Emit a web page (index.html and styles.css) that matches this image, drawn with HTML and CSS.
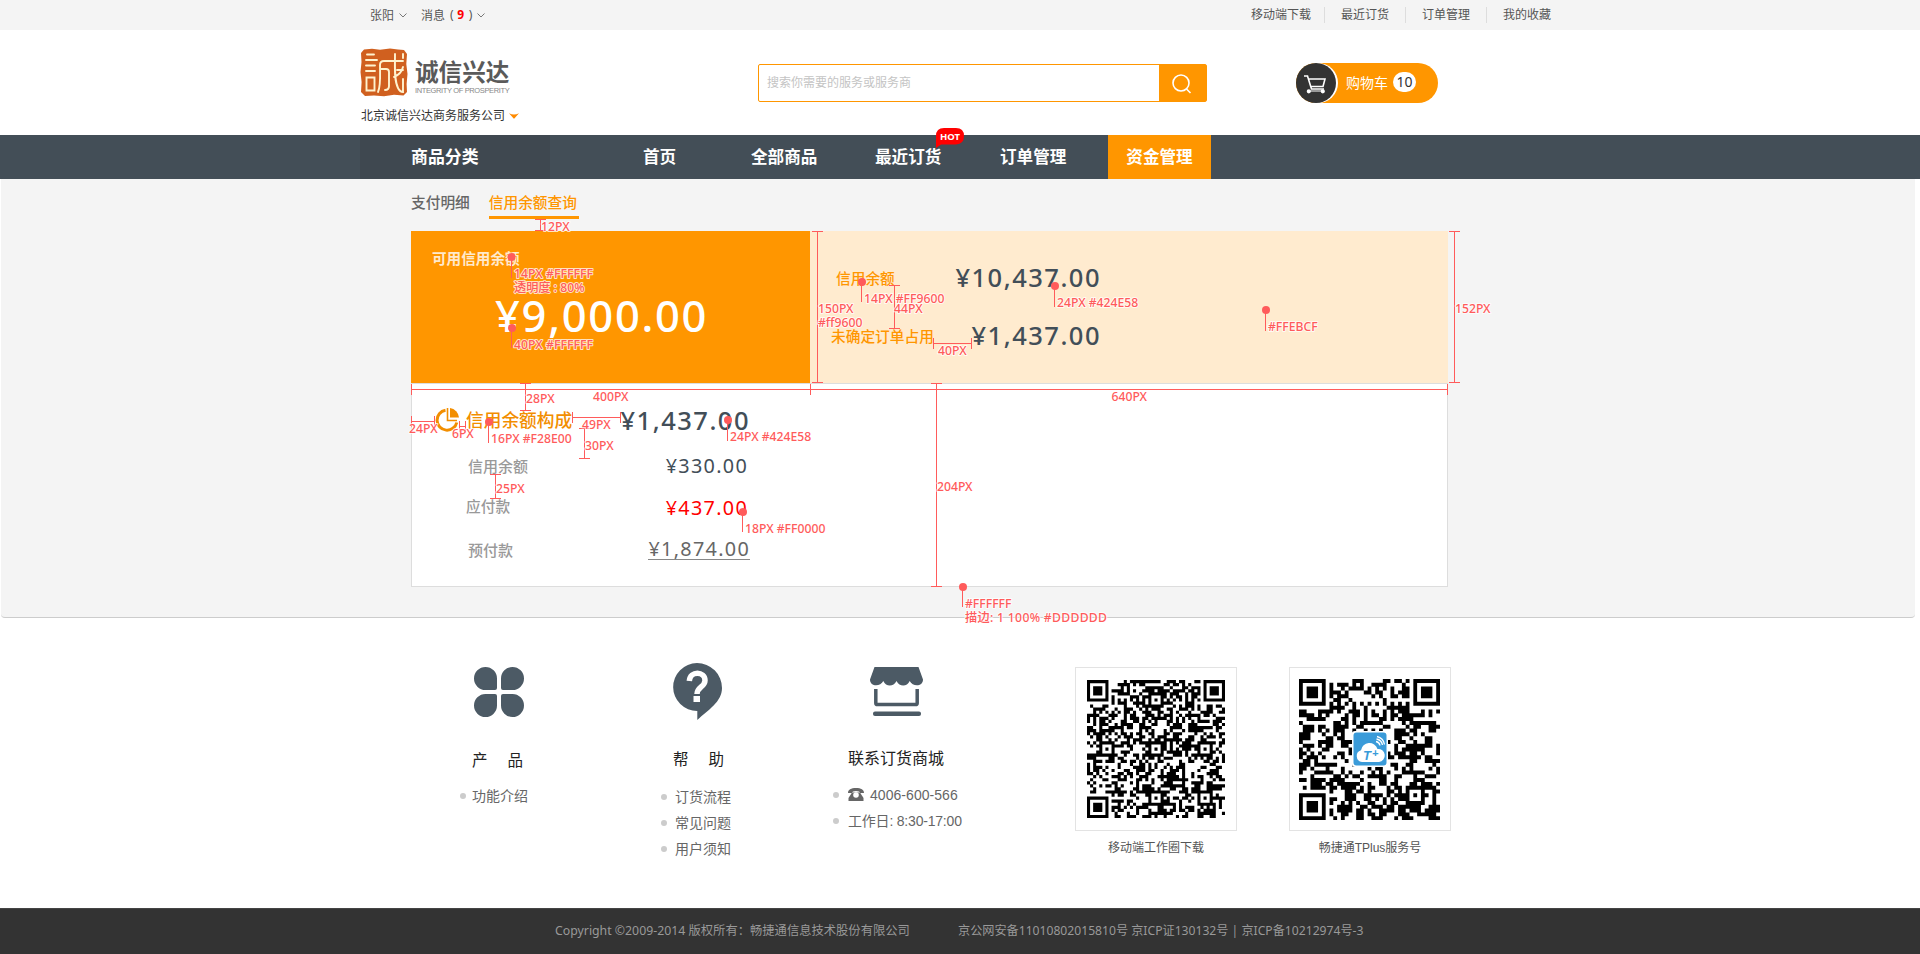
FILE: index.html
```html
<!DOCTYPE html>
<html lang="zh-CN">
<head>
<meta charset="utf-8">
<title>信用余额查询</title>
<link rel="stylesheet" href="styles.css">
</head>
<body>
<header>
  <div class="topbar">
    <div class="wrap topbar-row">
      <span class="user">张阳</span>
      <svg class="chev" width="8" height="5" viewBox="0 0 8 5"><path d="M.5.5 4 4 7.500.5"/></svg>
      <span class="msg">消息<i class="paren open">(</i><b>9</b><i class="paren">)</i></span>
      <svg class="chev" width="8" height="5" viewBox="0 0 8 5"><path d="M.5.5 4 4 7.500.5"/></svg>
      <nav class="toplinks"><a>移动端下载</a><a>最近订货</a><a>订单管理</a><a>我的收藏</a></nav>
    </div>
  </div>
  <div class="wrap masthead">
    <div class="brand">
      <div class="brand-row">
        <svg class="seal" width="48" height="49" viewBox="0 0 48 49">
          <path fill="#d0601f" d="M4 1.500 12 .8 20 1.800 30 .6 38 1.500 44 2 47 6 46.300 16 47.500 26 46.600 36 47 44 43.500 47.500 34 46.800 24 48.300 14 47.400 5 48 1 44 1.600 34 .5 24 1.500 14 1 5z"/>
          <g fill="none" stroke="#fff3cf" stroke-width="1.900" stroke-linecap="round">
            <path d="M7 6.500h7M6 12h11M6 17.500h9M6 23h9M6.500 29.500h8v13h-8z"/>
            <path d="M18 44c3-6 2-18 2-27q0-4 4-4h19M20 21h6q3 0 3 3v14q0 4-4 4M35 6c0 14-1 26 3 34q2 4 5 4v-13M43 6v4M43 19c-1 4-4 8-9 10M37 22h6"/>
          </g>
        </svg>
        <div class="brand-name"><strong>诚信兴达</strong><small>INTEGRITY OF PROSPERITY</small></div>
      </div>
      <div class="company">北京诚信兴达商务服务公司
        <svg width="10" height="6" viewBox="0 0 10 6"><path fill="#ff8a00" d="M0 .3Q5 2.800 10 .3L5.600 5.300Q5 6 4.400 5.300z"/></svg>
      </div>
    </div>
    <div class="search">
      <div class="search-input">搜索你需要的服务或服务商</div>
      <div class="search-btn"><svg width="20" height="20" viewBox="0 0 20 20" fill="none" stroke="#fff" stroke-width="1.600"><circle cx="9" cy="9" r="8"/><path d="m14.500 15 4 4"/></svg></div>
    </div>
    <div class="cart">
      <div class="cart-icon"><svg width="22" height="19" viewBox="0 0 22 19" fill="none" stroke="#fff" stroke-width="1.600"><path d="M0 1h3.500L7.500 14H20M4.500 4H21L19 11.500H7"/><path d="M4 16h15" stroke-width="1"/><circle cx="4.800" cy="16.300" r="1.300" fill="#fff"/><circle cx="18.800" cy="16.300" r="1.300" fill="#fff"/></svg></div>
      <span class="cart-label">购物车</span><span class="cart-count">10</span>
    </div>
  </div>
  <div class="navbar">
    <nav class="wrap nav-row">
      <a class="nav-cat">商品分类</a>
      <a class="n-home">首页</a>
      <a class="n-all">全部商品</a>
      <a class="n-recent">最近订货<span class="hot"><svg width="28" height="20" viewBox="0 0 28 20"><path fill="#f00" d="M0 20V8Q0 0 8 0H20Q28 0 28 8T20 16.500H5z"/></svg><em>HOT</em></span></a>
      <a class="n-order">订单管理</a>
      <a class="n-fund">资金管理</a>
    </nav>
  </div>
</header>

<main class="page">
  <div class="content">
    <div class="tabs"><a>支付明细</a><a class="active">信用余额查询</a></div>
    <section class="summary">
      <div class="available"><h2>可用信用余额</h2><p>¥9,000.00</p></div>
      <div class="detail">
        <div class="d-row"><span class="d-label first">信用余额</span><span class="money">¥10,437.00</span></div>
        <div class="d-row"><span class="d-label">未确定订单占用</span><span class="money">¥1,437.00</span></div>
      </div>
    </section>
    <section class="compose">
      <div class="c-head">
        <svg width="24" height="24" viewBox="0 0 24 24" fill="none" stroke="#f28e00" stroke-width="3"><path d="M10.500 2.300A10 10 0 1 0 21.800 14.500"/><path stroke-width="1.600" d="M12.500 0v12.500H22"/><path fill="#f28e00" stroke="none" d="M15 0A10.500 10.500 0 0 1 24 9.500H15z"/></svg>
        <h3>信用余额构成</h3><span class="money">¥1,437.00</span>
      </div>
      <div class="c-row"><span class="c1">信用余额</span><b>¥330.00</b></div>
      <div class="c-row due"><span>应付款</span><b>¥437.00</b></div>
      <div class="c-row pre"><span class="c3">预付款</span><b>¥1,874.00</b></div>
    </section>
  </div>
</main>

<section class="help">
  <div class="help-col col-product">
    <svg width="50" height="50" viewBox="0 0 50 50" fill="#4c5a65"><path d="M11.500 0A11.500 11.500 0 0 1 23 11.500V21Q23 23 21 23H11.500A11.500 11.500 0 0 1 11.500 0zM38.500 0A11.500 11.500 0 0 1 38.500 23H29Q27 23 27 21V11.500A11.500 11.500 0 0 1 38.500 0zM11.500 50A11.500 11.500 0 0 1 11.500 27H21Q23 27 23 29V38.500A11.500 11.500 0 0 1 11.500 50zM38.500 50A11.500 11.500 0 0 1 27 38.500V29Q27 27 29 27H38.500A11.500 11.500 0 0 1 38.500 50z"/></svg>
    <h4>产<span></span>品</h4>
    <ul><li>功能介绍</li></ul>
  </div>
  <div class="help-col col-help">
    <svg width="50" height="57" viewBox="0 0 50 57"><path fill="#4c5a65" d="M25 0A25 25 0 0 1 50 25C50 39 36 47 25.300 57V48A24 24 0 0 1 25 0z"/><path fill="none" stroke="#fff" stroke-width="5.500" d="M17.300 18C18 7.500 33 8 33 17.500 33 24 25 24 25 31"/><path fill="#fff" d="M21.500 33h6.500v6h-6.500z"/></svg>
    <h4>帮<span></span>助</h4>
    <ul><li>订货流程</li><li>常见问题</li><li>用户须知</li></ul>
  </div>
  <div class="help-col col-contact">
    <svg width="53" height="50" viewBox="0 0 53 50"><path fill="#4c5a65" d="M4.500 0H48.500L53 12.500C53 20 42.500 20 39.700 14 37 20 29.500 20 26.500 14 23.500 20 16 20 13.300 14 10.500 20 0 20 0 12.500z"/><path fill="none" stroke="#4c5a65" stroke-width="3.500" d="M5.800 22V36Q5.800 37.600 7.500 37.600H45.500Q47.200 37.600 47.200 36V22"/><rect x="3" y="44.500" width="48" height="4.500" rx="2" fill="#4c5a65"/></svg>
    <h4>联系订货商城</h4>
    <ul>
      <li><svg class="phone" width="16" height="13" viewBox="0 0 16 13"><path fill="#666" d="M8 0C13 0 16 1.500 16 5H12Q12 3 8 3T4 5H0C0 1.500 3 0 8 0z"/><path fill="#666" d="M4 4.500H12L15.500 10V13H.5V10z"/><circle cx="8" cy="7" r="2.800" fill="#fff"/></svg><span class="tel">4006-600-566</span></li>
      <li><span class="hours">工作日: 8:30-17:00</span></li>
    </ul>
  </div>
  <figure class="qr-fig qr-a"><div class="qr-box"><svg id="qr1" width="138" height="138" viewBox="0 0 45 45"></svg></div><figcaption>移动端工作圈下载</figcaption></figure>
  <figure class="qr-fig qr-b"><div class="qr-box"><svg id="qr2" width="141" height="141" viewBox="0 0 37 37"></svg>
    <svg class="tplus" width="36" height="36" viewBox="0 0 36 36"><rect width="36" height="36" rx="3" fill="#fff"/><rect x="1.500" y="1.500" width="33" height="33" rx="3" fill="#3a9bd9"/><path fill="#fff" d="M10 31A6 6 0 0 1 9 19.300 8.500 8.500 0 0 1 25.500 18 6.500 6.500 0 0 1 27 31z"/><path fill="none" stroke="#fff" stroke-width="1.300" d="M24 10.500a5 5 0 0 1 4 4M24.500 8a7.500 7.500 0 0 1 6 6M25 5.500a10 10 0 0 1 7.500 8"/><text x="11" y="29" class="tp">T</text><text x="20" y="26" class="tp small">+</text></svg></div><figcaption>畅捷通TPlus服务号</figcaption></figure>
</section>

<footer class="foot"><span class="copy">Copyright ©2009-2014 版权所有：畅捷通信息技术股份有限公司</span><span class="icp">京公网安备11010802015810号 京ICP证130132号 | 京ICP备10212974号-3</span></footer>

<!-- Redline layer: dimensions and colour callouts -->
<svg class="spec" width="1920" height="954" viewBox="0 0 1920 954">
  <path class="rule" d="M540.500 219v12M535 219.500h11M535 230.500h11
    M511.500 257v21M511.500 328v20
    M817.500 231v152M812 231.500h11M812 382.500h11
    M861.500 282v20M894.500 285v43M889 285.500h11M889 328.500h11M1054.500 286v21
    M933.500 343.500h38M933.500 338v11M971.500 338v11
    M1265.500 310v21M1454.500 231v152M1449 231.500h11M1449 382.500h11
    M411 389.500h1037M411.500 384v11M810.500 384v11M1447.500 384v11
    M525.500 383v27M520 383.500h11M520 410.500h11
    M411.500 421.500h23M411.500 416v11M434.500 416v11M459.500 426.500h6M459.500 421v11M465.500 421v11
    M488.500 422v21M572.500 417.500h48M572.500 412v11M620.500 412v11
    M584.500 428v31M579 428.500h11M579 458.500h11M727.500 420v21
    M495.500 474v25M490 474.500h11M490 498.500h11M742.500 512v20
    M936.500 383v204M931 383.500h11M931 586.500h11M962.500 587v20"/>
  <g class="dots"><circle cx="511.500" cy="257" r="4"/><circle cx="512" cy="328" r="4"/><circle cx="862" cy="282" r="4"/><circle cx="1055" cy="286" r="4"/><circle cx="1266" cy="310" r="4"/><circle cx="489" cy="422" r="4"/><circle cx="728" cy="420" r="4"/><circle cx="743" cy="512" r="4"/><circle cx="963" cy="587" r="4"/></g>
  <g class="notes">
    <text x="541" y="231">12PX</text>
    <text x="514" y="278" textLength="79">14PX #FFFFFF</text><text x="514" y="292">透明度 : 80%</text>
    <text x="514" y="349" textLength="79">40PX #FFFFFF</text>
    <text x="818" y="313">150PX</text><text x="818" y="327">#ff9600</text>
    <text x="864" y="303">14PX #FF9600</text><text x="894" y="313">44PX</text>
    <text x="1057" y="307">24PX #424E58</text><text x="938" y="355">40PX</text>
    <text x="1268" y="331">#FFEBCF</text><text x="1455" y="313">152PX</text>
    <text x="593" y="401">400PX</text><text x="1111.500" y="401">640PX</text>
    <text x="526" y="403">28PX</text><text x="409" y="433">24PX</text><text x="452" y="438">6PX</text>
    <text x="491" y="443">16PX #F28E00</text><text x="582" y="429">49PX</text><text x="585" y="450">30PX</text>
    <text x="730" y="441">24PX #424E58</text><text x="496" y="493">25PX</text>
    <text x="745" y="533">18PX #FF0000</text><text x="937" y="491">204PX</text>
    <text x="965" y="608">#FFFFFF</text><text x="965" y="622" textLength="142">描边: 1 100% #DDDDDD</text>
  </g>
</svg>
<script src="script.js"></script>
</body>
</html>
```
FILE: styles.css
```css
* { box-sizing: border-box; }
body, h2, h3, h4, p, ul, figure { margin: 0; padding: 0; }
body { position: relative; width: 1920px; height: 954px; overflow: hidden; background: #fff; color: #333; font-family: "Noto Sans", "Noto Sans CJK SC", sans-serif; font-size: 12px; white-space: nowrap; }
ul { list-style: none; }
i, em { font-style: normal; }
svg { display: block; flex: none; }
.wrap { width: 1200px; margin: 0 auto; }

.topbar { height: 30px; background: #f4f4f4; color: #555; }
.topbar-row { display: flex; align-items: center; height: 30px; padding-left: 10px; }
.chev { fill: none; stroke: #777; margin: 0 14px 0 5px; }
.msg { display: flex; }
.msg b { color: #f00; width: 12px; text-align: center; }
.paren { padding-left: 2px; }
.paren.open { padding: 0 1px 0 5px; }
.msg + .chev { margin-left: 5px; }
.toplinks { display: flex; margin-left: auto; margin-right: 9px; line-height: 16px; }
.toplinks a + a { margin-left: 13px; padding-left: 16px; border-left: 1px solid #ddd; }
.toplinks a + a + a { margin-left: 16px; }

.masthead { display: flex; height: 105px; }
.brand { width: 398px; padding-top: 18px; }
.brand-row { display: flex; gap: 7px; height: 49px; }
.brand-name strong { display: block; margin-top: 8px; font-size: 23.600px; line-height: 30px; font-weight: 700; font-family: "Noto Sans CJK SC", sans-serif; color: #5a5a5a; }
.brand-name small { display: block; font: 7.500px/10px "Liberation Sans", sans-serif; color: #888; letter-spacing: -.37px; }
.company { display: flex; align-items: center; gap: 4px; margin-top: 10px; padding-left: 1px; line-height: 18px; }
.search { display: flex; width: 449px; height: 38px; margin-top: 34px; border: 1px solid #ff9600; border-radius: 2px; margin-right: 89px; }
.search-input { width: 400px; padding-left: 8px; line-height: 36px; color: #c4c4c4; }
.search-btn { display: flex; flex: 1; padding: 9px 0 0 13px; background: #ff9600; }
.cart { display: flex; align-items: center; width: 142px; height: 40px; margin-top: 33px; background: #ff9600; border-radius: 20px; color: #fff; font-size: 14px; }
.cart-icon { display: flex; width: 40px; height: 40px; padding: 12px 0 0 8px; border-radius: 20px; background: #333; box-shadow: 2px 0 0 #fff; }
.cart-label { margin: -3px 5px 0 10px; }
.cart-count { width: 23px; height: 20px; margin-top: -2px; border-radius: 10px; background: #fff; color: #333; text-align: center; line-height: 19px; }

.navbar { height: 44px; background: #434e57; }
.nav-row { display: flex; height: 44px; line-height: 43px; color: #fff; font-size: 16.600px; font-weight: 700; }
.nav-cat { width: 190px; padding-left: 51px; background: #3f4850; font-size: 16.900px; line-height: 44px; }
.n-home { margin-left: 93px; width: 108px; }
.n-all { width: 124px; }
.n-recent { position: relative; width: 125px; }
.n-order { width: 108px; }
.n-fund { width: 103px; background: #ff9600; text-align: center; line-height: 44px; }
.hot { position: absolute; left: 61px; top: -7px; width: 28px; height: 20px; }
.hot em { position: absolute; left: 0; top: 0; width: 28px; text-align: center; font-size: 9.500px; line-height: 17px; }

.page { height: 439px; margin: 0 5px 0 1px; background: #f4f4f4; border-bottom: 1px solid #ccc; border-radius: 0 0 4px 4px; }
.content { width: 1037px; margin-left: 410px; }
.tabs { display: flex; gap: 19px; height: 52px; padding-top: 12px; font-size: 14.700px; line-height: 23px; font-weight: 500; color: #666; }
.tabs a { height: 28px; }
.tabs .active { width: 90px; color: #ff9600; border-bottom: 3px solid #ff9600; }
.summary { display: flex; height: 152px; }
.available { width: 399px; padding: 15px 21px; background: #ff9600; color: #fff; }
.available h2 { font-size: 14.600px; line-height: 24px; font-weight: 600; opacity: .8; }
.available p { margin: 15px 0 0 63px; font-size: 43.500px; line-height: 60px; font-weight: 500; letter-spacing: 1.700px; }
.detail { flex: 1; padding: 26px 0 0 21px; background: #ffebcf; }
.d-row { display: flex; align-items: center; width: 270px; height: 40px; margin-bottom: 18px; justify-content: space-between; }
.d-label { color: #ff9600; font-size: 14.700px; font-weight: 500; }
.d-label.first { padding-left: 5px; }
.money { font-size: 25.500px; color: #424e58; letter-spacing: 1.500px; font-weight: 500; line-height: 40px; }
.compose { height: 204px; background: #fff; border: 1px solid #ddd; padding: 16px 0 0 23px; }
.c-head { display: flex; align-items: center; width: 315px; height: 40px; }
.c-head h3 { margin: -2px auto 0 7px; color: #f28e00; font-size: 17.700px; font-weight: 500; }
.c-row { display: flex; align-items: center; justify-content: space-between; width: 313px; height: 42px; padding-left: 31px; color: #999; font-size: 14.700px; font-weight: 500; margin-top: 4px; }
.c-row + .c-row { margin-top: 0; }
.c-row b { font-size: 19.800px; font-weight: 400; letter-spacing: 1.300px; color: #424e58; }
.c-row .c1, .c-row .c3 { margin-left: 2px; font-size: 15px; }
.c-row.due span { margin-top: -4px; }
.c-row.due b { color: #f00; }
.c-row.pre { width: 315px; }
.c-row.pre b { color: #666; line-height: 20px; height: 21px; border-bottom: 1px solid #888; }

.help { display: flex; height: 290px; padding-top: 45px; }
.help-col { padding-top: 4px; }
.col-product { width: 201px; margin-left: 460px; }
.col-product > svg { margin-left: 14px; }
.col-help { width: 172px; padding-top: 0; }
.col-help > svg { margin-left: 11px; }
.col-contact { width: 242px; }
.col-contact > svg { margin-left: 37px; }
.help h4 { height: 26px; line-height: 26px; font-size: 15.500px; font-weight: 400; color: #222; }
.help h4 span { display: inline-block; width: 20px; }
.col-product h4 { margin: 30px 0 0 12px; }
.col-help h4 { margin: 26px 0 0 12px; }
.col-contact h4 { margin: 28px 0 0 15px; font-size: 16px; }
.help li { display: flex; align-items: center; height: 26px; font-size: 14px; color: #666; }
.help li::before { content: ""; width: 6px; height: 6px; margin: 1px 6px 0 0; border-radius: 50%; background: #ccc; }
.col-product ul { margin-top: 9px; }
.col-help ul { margin-top: 11px; }
.col-help li::before { margin-right: 8px; }
.col-contact ul { margin-top: 10px; }
.col-contact li::before { margin-right: 9px; }
.tel { margin: 1px 0 0 6px; font-family: "Liberation Sans", sans-serif; letter-spacing: .05px; }
.hours { font-family: "Liberation Sans", "Noto Sans CJK SC", sans-serif; letter-spacing: -.2px; }
.qr-fig { width: 162px; padding-top: 4px; }
.qr-b { margin-left: 52px; }
.qr-box { position: relative; display: flex; align-items: center; justify-content: center; width: 162px; height: 164px; border: 1px solid #e3e3e3; }
.qr-b .qr-box { padding-right: 1px; }
.tplus { position: absolute; left: 62px; top: 63px; }
.tp { font: italic 700 13px "Liberation Sans", sans-serif; fill: #3a9bd9; }
.tp.small { font-size: 11px; }
.qr-fig figcaption { line-height: 20px; margin-top: 7px; text-align: center; color: #555; font-family: "Liberation Sans", "Noto Sans CJK SC", sans-serif; }
.foot { display: flex; height: 46px; padding-left: 555px; background: #333; border-top: 1px solid #444; line-height: 43px; font-size: 12.300px; color: #999; }
.copy { width: 403px; }
.icp { font-size: 12.150px; }

.spec { position: absolute; left: 0; top: 0; pointer-events: none; }
.rule { fill: none; stroke: #ff5b5b; stroke-width: 1; }
.dots { fill: #ff5b5b; }
.notes { font-size: 12.200px; font-weight: 500; fill: #ff5b5b; stroke: #fff; stroke-opacity: .75; stroke-width: 2px; stroke-linejoin: round; paint-order: stroke; }
```
FILE: script.js
```js
// Draws a QR-style module grid with finder, timing and alignment marks.
function drawCode(id, n, seed, centres) {
  var s = seed, d = '', grid = [];
  function rnd() { s = (s * 1103515245 + 12345) & 0x7fffffff; return (s >> 8) / 0x7fffff; }
  for (var y = 0; y < n; y++) {
    grid.push([]);
    for (var x = 0; x < n; x++) grid[y].push(x === 6 || y === 6 ? (x + y) % 2 === 0 : rnd() < 0.5);
  }
  function mark(cx, cy, r, quiet) {
    for (var j = -quiet; j <= quiet; j++) for (var i = -quiet; i <= quiet; i++) {
      var k = Math.max(Math.abs(i), Math.abs(j)), px = cx + i, py = cy + j;
      if (px < 0 || py < 0 || px >= n || py >= n) continue;
      grid[py][px] = k === r || k <= r - 2;
    }
  }
  mark(3, 3, 3, 4); mark(n - 4, 3, 3, 4); mark(3, n - 4, 3, 4);
  centres.forEach(function (c) { mark(c[0], c[1], 2, 2); });
  for (y = 0; y < n; y++) for (x = 0; x < n; x++) if (grid[y][x]) {
    var w = 1;
    while (x + w < n && grid[y][x + w]) w++;
    d += 'M' + x + ' ' + y + 'h' + w + 'v1.04h-' + w + 'z';
    x += w;
  }
  var p = document.createElementNS('http://www.w3.org/2000/svg', 'path');
  p.setAttribute('d', d);
  document.getElementById(id).appendChild(p);
}
drawCode('qr1', 45, 7193, [[22, 6], [6, 22], [22, 22], [38, 22], [22, 38], [38, 38]]);
drawCode('qr2', 37, 4127, [[30, 30]]);
```
